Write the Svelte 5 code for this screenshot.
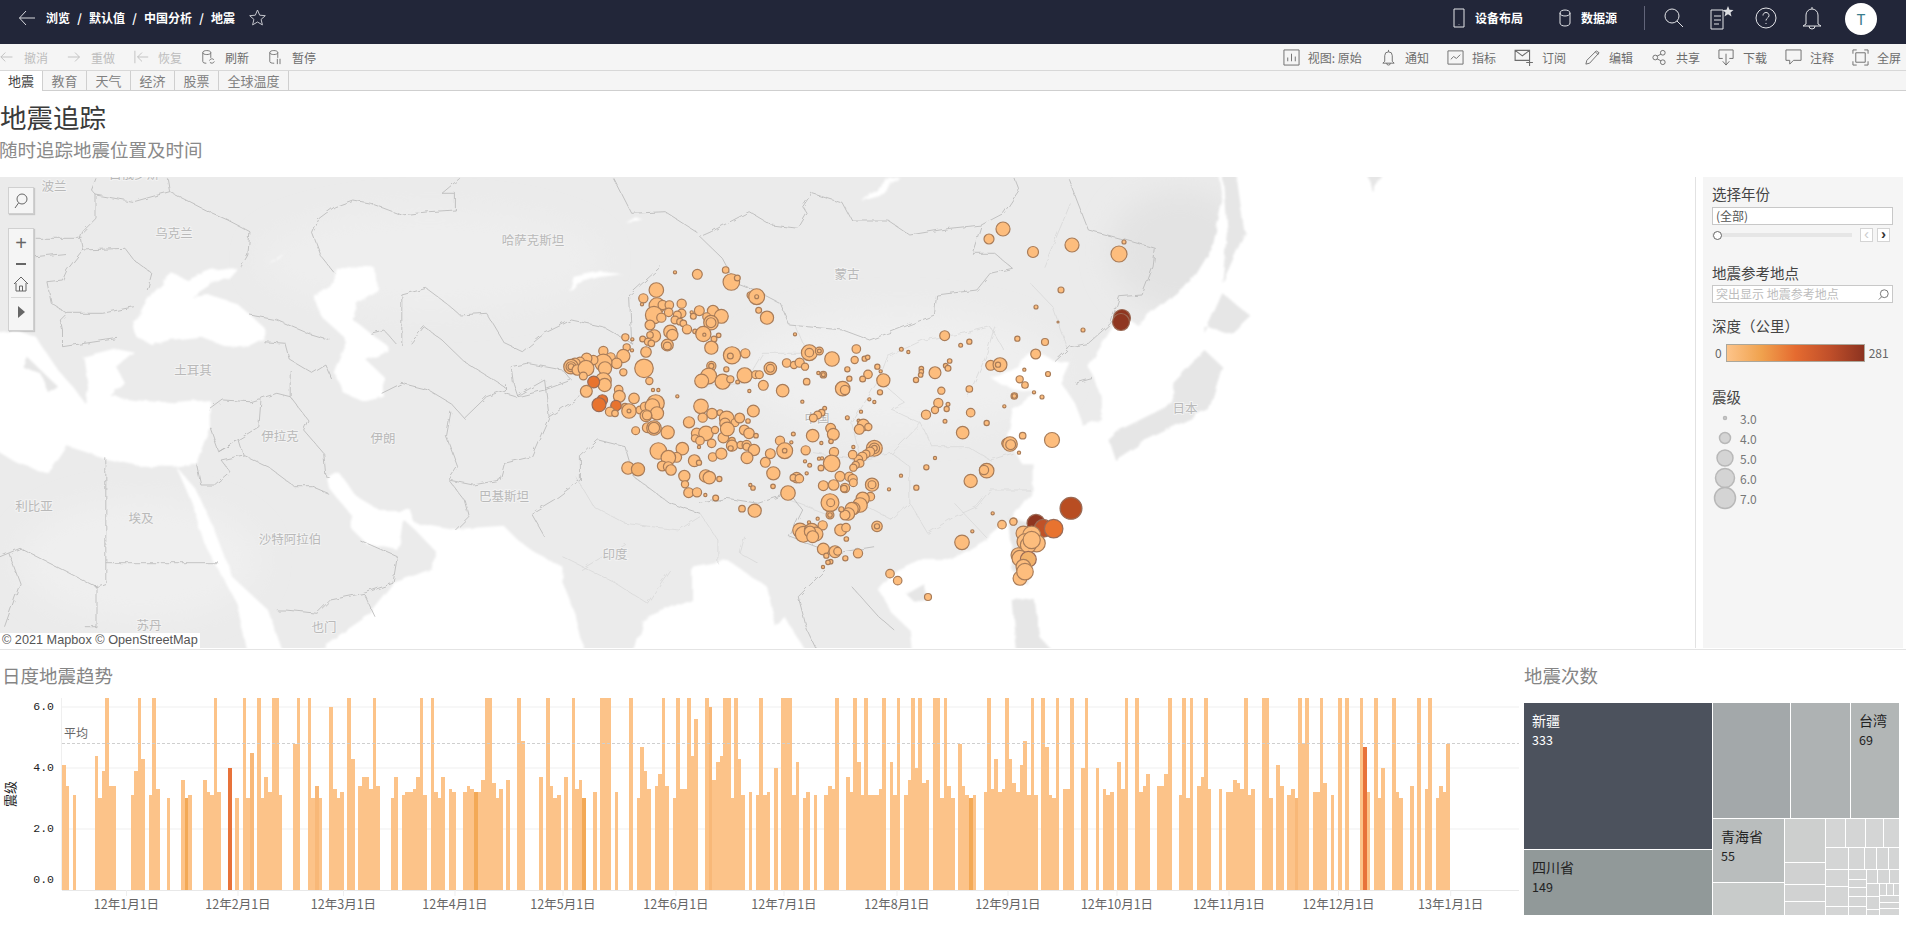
<script>
  // page coordinates come from crops of the reference, a = western crop, b = eastern crop
  const a = (s) => s.trim().split(/\s+/).map((p) => { const [x, y] = p.split(',').map(Number); return `${(x / 2.24).toFixed(1)},${(170 + y / 3).toFixed(1)}`; }).join(' ');
  const b = (s) => s.trim().split(/\s+/).map((p) => { const [x, y] = p.split(',').map(Number); return `${(700 + x / 2.24).toFixed(1)},${(170 + y / 3).toFixed(1)}`; }).join(' ');

  const water = [
    a('300,470 320,410 345,360 385,310 420,330 470,300 530,290 510,320 470,345 430,380 470,375 530,400 590,470 590,510 560,530 500,525 450,500 380,510 340,525 305,500'),
    a('750,290 840,295 845,360 800,400 790,450 830,490 870,530 870,545 820,570 860,620 860,680 815,695 770,670 750,610 770,540 770,500 720,440 705,380 750,340'),
    a('-20,490 40,480 80,500 130,600 170,660 190,700 195,650 185,560 260,535 300,545 260,590 280,640 250,680 300,690 390,700 470,690 470,770 440,880 390,890 320,890 230,865 150,830 110,910 40,880 -20,830'),
    a('395,890 440,960 480,1080 520,1220 600,1320 635,1450 555,1450 530,1300 490,1200 460,1130 430,1000'),
    a('735,930 760,910 800,980 850,1020 920,1020 930,1060 1020,1080 1130,1070 1160,1110 1200,1150 1260,1190 1260,1240 1290,1340 1310,1450 700,1450 820,1340 880,1240 960,1200 980,1150 930,1080 905,1050 900,1100 890,1140 820,1120 790,1080 790,1040 740,960'),
    a('1420,1450 1440,1350 1568,1280 1580,1450'),
    a('1275,365 1285,320 1340,305 1395,312 1340,322 1295,340'),
    b('-20,1190 60,1170 150,1250 170,1370 190,1340 240,1450 -20,1450'),
    b('1160,0 1170,90 1150,220 1100,330 1040,400 980,465 950,440 920,480 870,590 900,680 900,750 860,770 840,700 810,640 830,580 795,575 750,540 700,600 650,620 680,650 760,670 700,720 690,800 720,880 745,880 745,960 700,1040 640,1110 560,1170 490,1170 440,1200 400,1260 430,1330 470,1380 475,1450 2320,1450 2320,0'),
    b('360,90 420,30 450,25 400,75'),
    a('600,280 640,250 620,270'),
    a('1420,140 1440,150 1400,155'),
  ];
  const islands = [
    b('1170,0 1200,0 1220,190 1170,340 1180,190'),
    b('1130,490 1170,370 1235,440 1195,490 1130,470'),
    b('940,780 1060,700 1060,640 1130,540 1170,590 1140,720 1060,770 1000,810 930,870 915,810'),
    b('700,1290 720,1285 750,1290 760,1400 795,1450 710,1450'),
    b('460,1270 500,1240 510,1290 480,1295'),
    b('1490,0 1530,0 1510,70'),
    b('690,1040 740,1060 770,1080 730,1240 700,1200'),
    a('60,560 130,650 110,670 90,610 50,590'),
  ];
  const borders = [
    a('790,90 750,110 715,145 700,190 720,260 750,310'),
    a('790,90 830,100 870,120 900,135 960,125 1020,120 1020,70 990,70 1030,25'),
    a('1375,25 1415,130 1490,125 1560,185'),
    a('375,25 380,65 460,120 510,150 560,185 555,255 540,290'),
    a('380,65 300,95 215,75 205,60 215,25'),
    a('215,75 215,145 185,185 180,205 185,240 280,235 300,270 340,310 330,360'),
    a('185,240 150,300 140,330 105,335 115,400 150,430 230,430 300,410'),
    a('80,205 185,205'),
    a('80,260 150,250'),
    a('150,430 135,450 140,480 140,530 190,520 265,505'),
    a('560,435 620,450 690,490 740,510'),
    a('590,515 640,520 650,570 700,610 730,585 745,630'),
    a('470,720 500,690 560,695 620,670 650,680'),
    a('650,600 650,680 690,750 680,780 725,850 730,920 740,925'),
    a('585,680 580,770 490,845 470,770'),
    a('490,845 535,810 545,855 495,870 515,905 480,945 450,945 440,880'),
    a('545,855 600,890 660,950 700,950 735,970'),
    a('1010,725 1000,800 1025,890 1005,930 1060,945 1120,930 1130,880 1190,860 1230,740 1220,630 1155,680 1130,670'),
    a('855,670 900,640 960,660 1010,700 1040,745 1090,680 1130,660 1130,640'),
    a('900,525 900,375 955,355 1000,400 1030,435 1090,430 1130,520 1170,545 1220,490 1280,450 1350,470 1415,520 1410,375 1480,290'),
    a('890,525 860,480 830,490'),
    a('920,520 950,470 990,510 1040,575 1130,650'),
    a('1145,590 1150,640 1160,680 1220,660 1280,630 1260,600 1180,580 1145,590'),
    a('1005,930 1040,990 1050,1040 1020,1080'),
    a('1220,1100 1190,1030 1240,990 1300,930 1300,860 1340,810 1400,830 1420,920 1500,1000 1568,1030'),
    a('1230,740 1300,680'),
    a('620,1320 640,1320 710,1330 740,1290 815,1270 880,1240 890,1160 805,1110'),
    a('815,1270 840,1340'),
    a('237,865 237,1240 215,1250 215,1370 190,1370'),
    a('237,1178 490,1178'),
    a('215,1250 45,1135 0,1160'),
    a('20,1150 45,1240 10,1370'),
    b('0,200 25,185 110,125 160,165 220,175 240,130 230,110 250,70 320,100 340,150 420,150 470,195 560,175 630,165 610,250 660,250 700,295 650,310 620,360 530,375 525,435 420,490 380,510 320,480 200,465 180,400 130,365 80,340 50,265 0,200'),
    b('630,165 680,130 715,60 705,25'),
    b('825,25 870,180 940,205 1020,235 1015,290 990,375 940,380 920,460 870,520 830,530 795,575'),
    b('840,640 880,625'),
    b('0,1000 60,985 130,1000 200,970 230,1020 200,1100 300,1150 390,1130'),
    b('280,1200 220,1280 240,1380 260,1437'),
    b('340,1250 400,1340 435,1380'),
  ];
  const provinces = [
    b('215,470 240,550 140,550 100,640 0,650'),
    b('495,760 520,830 600,830 650,870 700,850'),
    b('430,720 460,700 400,630 420,560 500,510 590,490 650,470 680,540'),
    b('430,850 470,890 470,1000 510,1090 570,1040 620,1010 650,960 740,960'),
    b('570,1000 640,1100'),
    b('600,680 640,560 660,470'),
    b('740,340 790,410 825,540'),
    b('770,290 830,100'),
    b('250,850 360,870 430,850 495,760 430,720'),
    b('200,990 280,1030 360,1000 430,1050 470,1000'),
    b('100,1100 90,1150 130,1180'),
    b('0,1030 40,1110 40,1180'),
    b('360,870 340,760 400,630'),
    a('1290,920 1330,1010 1400,1060 1520,1080 1568,1040'),
    a('1260,1160 1380,1240 1450,1300 1500,1200'),
    a('1300,1200 1400,1120'),
  ];
  const labels = [
    ['白俄罗斯', 134, 176], ['波兰', 54, 188], ['乌克兰', 174, 235], ['哈萨克斯坦', 533, 242], ['土耳其', 193, 372],
    ['伊拉克', 280, 438], ['伊朗', 383, 440], ['巴基斯坦', 504, 498], ['利比亚', 34, 508], ['埃及', 141, 520],
    ['沙特阿拉伯', 290, 541], ['印度', 615, 556], ['苏丹', 149, 627], ['也门', 324, 629], ['蒙古', 847, 276],
    ['中国', 817, 420], ['日本', 1185, 410],
  ];

  const west = [[412,13,13],[345,7,3],[497,0,8],[514,36,23],[532,24,7],[289,60,20],[250,85,12],[246,103,3],[572,76,9],[590,80,22],[590,80,4],[596,121,7],[621,143,18],[291,107,22],[308,105,12],[328,105,11],[365,101,12],[395,127,3],[418,122,13],[459,123,15],[484,139,19],[400,139,7],[282,135,24],[304,143,12],[326,127,11],[365,130,11],[352,135,10],[345,150,10],[360,155,8],[370,160,8],[440,140,10],[453,158,20],[453,158,13],[270,165,13],[381,178,12],[331,185,18],[337,195,15],[283,198,17],[405,184,5],[416,188,7],[430,192,21],[433,194,3],[462,207,7],[476,196,5],[248,207,7],[264,215,9],[270,195,8],[274,220,8],[322,225,16],[322,228,10],[196,202,9],[217,208,3],[200,232,9],[216,241,3],[258,246,14],[454,233,18],[516,256,24],[511,258,7],[556,250,12],[190,258,18],[152,262,12],[130,243,12],[170,280,14],[130,278,24],[135,295,18],[100,270,12],[80,265,14],[60,275,12],[45,280,14],[33,290,20],[33,290,13],[33,290,7],[52,300,14],[78,295,22],[70,318,10],[190,307,9],[252,295,26],[268,333,9],[105,335,12],[130,332,22],[134,345,18],[101,336,16,'#e8732f'],[454,288,12],[454,288,6],[499,298,6],[446,318,22],[425,333,19],[488,335,21],[511,328,9],[533,336,4],[554,316,21],[587,314,10],[598,314,10],[631,295,17],[631,295,10],[610,346,13],[568,363,3],[279,360,3],[295,360,3],[352,379,3],[79,364,16],[176,359,11],[178,379,16],[222,385,14],[127,390,14,'#e8732f'],[117,404,19,'#e8732f'],[168,407,14,'#e8732f'],[150,425,12],[165,430,8],[195,410,8],[207,423,20],[207,423,4],[240,420,10],[255,410,12],[287,400,24],[277,408,20],[291,430,18],[258,437,16],[261,436,12],[423,409,20],[456,431,14],[428,443,12],[387,457,15],[480,428,7],[500,445,20],[495,460,14],[525,458,10],[539,444,13],[580,423,16],[564,453,5],[227,482,10],[262,473,13],[282,474,20],[282,474,15],[323,487,18],[553,480,13],[567,490,14],[588,497,5],[410,490,14],[438,490,20],[465,480,9],[490,503,14],[502,477,19],[405,505,9],[420,512,11],[455,520,11],[516,512,8,'#f5b26e'],[516,527,15],[542,525,9],[560,525,12],[560,530,9],[582,540,15],[631,551,13],[660,512,12],[616,577,13],[561,563,16],[458,561,11],[484,551,15],[512,535,6],[417,531,3],[295,543,23],[367,536,17],[350,562,13],[325,563,20],[307,588,13],[325,590,13],[333,600,14],[403,572,16],[417,578,6],[204,594,17],[234,598,18,'#f5b26e'],[373,618,15],[375,643,9],[386,668,13],[411,667,12],[436,675,3],[467,684,7],[640,610,18],[437,618,17],[448,623,17],[478,627,6],[571,645,3],[579,654,5],[639,649,5],[546,716,8],[584,722,18]];
  const center = [[45,13,3],[494,17,13],[712,26,6],[568,35,6],[542,46,4],[88,68,22],[88,68,11],[118,63,10],[118,63,4],[229,57,11],[156,87,20],[20,99,11],[42,105,9],[59,98,12],[75,110,9],[224,90,9],[254,86,6],[263,82,5],[364,58,4],[385,66,3],[509,93,5],[497,107,5],[504,115,7],[632,106,13],[660,104,19],[654,104,6],[767,72,13],[292,110,6],[202,118,6],[130,134,8],[130,134,4],[115,129,3],[264,133,11],[302,124,3],[248,147,7],[208,146,6],[310,151,18],[424,116,5],[424,125,5],[422,135,5],[408,150,6],[465,128,16],[80,155,8],[719,148,9],[733,119,3],[735,165,8],[188,176,20],[195,180,12],[300,187,6],[484,182,9],[568,177,8],[762,187,3],[703,198,8],[703,198,5],[8,182,17],[67,215,3],[268,208,3],[283,216,3],[475,219,12],[465,240,9],[438,254,12],[504,223,4],[500,237,6],[572,248,11],[673,229,3],[243,245,3],[202,263,4],[134,235,4],[125,248,8],[113,255,10],[100,264,10],[495,274,4],[620,279,6],[236,272,3],[250,285,16],[265,291,9],[238,298,13],[152,295,13],[160,313,16],[98,317,17],[40,312,4],[153,334,5],[34,337,3],[124,339,3],[548,308,17],[728,317,8],[680,340,13],[690,342,20],[692,344,13],[220,351,3],[77,361,12],[162,366,12],[14,362,22],[14,362,5],[283,355,22],[283,355,14],[283,355,7],[270,365,12],[258,372,10],[247,380,12],[235,388,11],[240,400,10],[227,405,9],[220,413,9],[126,385,3],[117,386,3],[155,400,23],[75,394,3],[89,406,4],[123,414,7],[218,374,11],[717,368,3],[465,384,3],[439,412,6],[620,422,20],[612,420,12],[572,453,18],[363,437,3],[80,430,3],[50,443,14],[40,443,8],[58,446,11],[180,439,13],[208,440,12],[218,447,12],[220,458,10],[130,467,13],[161,465,14],[195,474,12],[192,476,8],[276,464,18],[276,464,10],[409,473,6],[327,478,3],[24,489,20],[271,500,11],[248,506,18],[150,518,25],[152,518,10],[240,525,20],[222,535,16],[215,537,18],[205,552,17],[195,555,13],[184,538,6],[150,555,10],[150,555,5],[113,566,3],[638,550,3],[87,577,3],[128,586,12],[291,589,14],[291,589,6],[60,601,20],[70,613,22],[95,602,20],[108,612,19],[90,605,15],[98,620,16],[182,600,16],[198,593,11],[199,627,5],[577,604,3],[546,637,20],[666,584,11],[701,574,8],[130,657,16],[165,665,16],[173,664,10],[234,670,12],[139,677,6],[152,695,5],[144,697,5],[196,685,6],[129,711,3],[330,731,11],[353,752,11]];
  const taiwan = [[213,85,31,'#b84d22'],[108,130,25,'#8f3620'],[130,145,25,'#c05228'],[161,146,26,'#e8732f'],[40,125,9],[70,160,20],[95,165,25],[110,190,24],[75,185,22],[55,225,20],[85,195,22],[60,235,22],[85,238,22,'#f2b26b'],[70,260,20],[60,295,19],[75,275,23],[95,180,24]];
  // north-east and sea points, already in page coordinates
  const east = [[1003,229,7],[989,239,5],[1033,252,5.5],[1072,245,7],[1119,254,8],[1124,242,2],[1061,290,3],[1036,307,2],[1058,322,1],[1083,330,2],[1045,342,3.5],[1048,374,2.5],[1042,397,2],[1052,440,7.5],[928,597,3.5],[1122,318,8.5,'#8f3620'],[1121,322,8.5,'#8f3620']];

  const place = (list, ox, oy) => list.map(([x, y, r, c]) => ({ x: ox + x / 3, y: oy + y / 3, r: r / 3 + 0.6, c }));
  const bubbles = [
    ...east.map(([x, y, r, c]) => ({ x, y, r, c })),
    ...place(west, 560, 270),
    ...place(center, 780, 330),
    ...place(taiwan, 1000, 480),
  ];

  // magnitudes x10, 65 = cut off at the top, +100 = deeper, +200 = deepest, +300 = a little deeper
  const segments = [
    { from: 62, to: 492, vals: [41,34,0,31,0,0,0,0,0,44,30,39,65,34,34,0,0,0,0,31,39,65,43,0,31,65,33,0,0,30,0,0,0,36,130,31,0,0,0,36,32,31,65,32,0,0,240,0,30,0,65,30,345,0,65,30,37,32,65,65,31,0,0,0,48,65,0,0,65,30,334,30,0,0,60,33,30,32,0,65,43,0,34,37,37,33,65,34,0,0,0,30,37,0,31,32,32,33,37,65,31,0,65,32,30,37,0,33,32,0,0,32,34,33,132,32,36,65,65] },
    { from: 492, to: 904, vals: [35,30,33,0,36,0,0,65,49,0,0,0,0,37,0,65,34,30,31,0,37,0,65,33,36,130,0,0,32,0,65,65,65,0,32,0,0,0,65,0,30,47,39,33,0,34,38,65,34,0,30,65,33,33,65,44,56,0,0,65,360,36,42,44,65,65,30,65,43,31,0,32,0,31,65,31,32,0,40,0,65,65,65,31,42,0,30,32,0,31,0,0,31,34,33,65,0,0,37,32,65,42,31,65,31,31,31,33,65,0,42,31,65,0] },
    { from: 904, to: 1450, vals: [31,36,65,40,65,35,36,0,65,65,30,65,34,30,0,48,34,31,130,31,0,0,32,65,33,43,32,33,65,43,35,32,41,49,31,65,31,0,65,47,31,30,65,0,33,33,65,0,0,40,65,0,0,40,0,33,31,32,0,42,33,65,0,0,65,32,34,38,0,0,34,34,38,65,0,0,31,65,30,65,0,34,37,65,33,0,0,33,0,32,32,36,35,33,65,31,33,0,0,65,65,30,0,41,34,0,31,33,330,65,48,65,0,32,32,65,35,0,31,0,65,0,65,0,0,0,65,247,32,0,65,30,40,0,0,65,32,30,0,0,34,0,65,0,33,65,0,30,34,32,48] },
  ];
  const tones = ['#fcc389', '#f3a956', '#e8733a', '#f8b878'];
  const y0 = 889;
  const unit = 30.5;
  const bars = segments.flatMap((s) => {
    const w = (s.to - s.from) / s.vals.length;
    return s.vals.map((raw, i) => {
      const v = raw % 100;
      const left = Math.round(s.from + i * w);
      const right = Math.round(s.from + (i + 1) * w);
      const h = Math.round(Math.min((v / 10) * unit, y0 - 697));
      return { x: left, w: right - left, h, tone: tones[Math.floor(raw / 100)], v };
    }).filter((b) => b.v > 0);
  });
  const months = [
    ['12年1月1日', 126.5], ['12年2月1日', 238], ['12年3月1日', 343.5], ['12年4月1日', 455], ['12年5月1日', 563],
    ['12年6月1日', 676], ['12年7月1日', 784], ['12年8月1日', 897], ['12年9月1日', 1008], ['12年10月1日', 1117],
    ['12年11月1日', 1229], ['12年12月1日', 1338.5], ['13年1月1日', 1450.7],
  ];
  const yticks = [['6.0', 706], ['4.0', 767], ['2.0', 828]];

  const c1 = '#d4d5d5';
  const map = (sizes, c, dir) => sizes.map((s) => ({ s, c, dir }));
  const tree = {
    dir: 'row', kids: [
      { s: 188, dir: 'col', kids: [
        { s: 146, c: '#4c525d', name: '新疆', n: 333, light: true },
        { c: '#919999', name: '四川省', n: 149 },
      ] },
      { dir: 'col', kids: [
        { s: 115, dir: 'row', kids: [
          { s: 77, c: '#a3a8aa' },
          { s: 59, c: '#aeb2b3' },
          { c: '#b2b6b6', name: '台湾', n: 69, right: true },
        ] },
        { dir: 'row', kids: [
          { s: 70.5, dir: 'col', kids: [{ s: 63, c: '#b9bdbd', name: '青海省', n: 55 }, { c: '#c8cbca' }] },
          { s: 40, dir: 'col', kids: [{ s: 43, c: '#cdcfce' }, { s: 21, c: '#d0d1d1' }, { s: 16, c: '#d1d2d2' }, { c: '#d2d3d3' }] },
          { dir: 'col', kids: [
            { s: 28, dir: 'row', kids: [...map([19.5, 19, 17], c1), { c: c1 }] },
            { s: 21, dir: 'row', kids: [...map([22.5, 15, 11, 11], c1), { c: c1 }] },
            { dir: 'row', kids: [
              { s: 22.5, dir: 'col', kids: [...map([16, 19], c1), { c: c1 }] },
              { s: 17, dir: 'col', kids: [...map([8.5, 7.5, 8, 9], c1), { c: c1 }] },
              { dir: 'col', kids: [
                { s: 13, dir: 'row', kids: [...map([10, 11], c1), { c: c1 }] },
                { dir: 'row', kids: [
                  { s: 12, dir: 'col', kids: [...map([12, 12], c1), { c: c1 }] },
                  { dir: 'col', kids: [
                    { s: 11, dir: 'row', kids: [...map([6, 6], c1), { c: c1 }] },
                    ...map([5.5, 5.5], c1),
                    { c: c1 },
                  ] },
                ] },
              ] },
            ] },
          ] },
        ] },
      ] },
    ],
  };

  const undo = [
    { label: '撤消', off: true, d: 'M14 9H1M6 4 1 9l5 5' },
    { label: '重做', off: true, d: 'M1 9h13M9 4l5 5-5 5' },
    { label: '恢复', off: true, d: 'M1 2v14M16 9H4M9 4 4 9l5 5' },
    { label: '刷新', d: 'M2 4c0-3 9-3 9 0s-9 3-9 0M2 4v10c0 1.500 2 2 4 2M11 4v6M9.500 13a3 3 0 0 1 5-1M15 14a3 3 0 0 1-5 1' },
    { label: '暂停', d: 'M2 4c0-3 9-3 9 0s-9 3-9 0M2 4v10c0 1.500 2 2 5 2M11 4v6M10.500 11v6M13.500 11v6' },
  ];
  const tools = [
    { label: '视图: 原始', d: 'M1 1h16v16H1zM5 13V9M9 13V5M13 13V8' },
    { label: '通知', d: 'M9 1v2M5 13V7a4 4 0 0 1 8 0v6l2 2H3zM7 15a2 2 0 0 0 4 0' },
    { label: '指标', d: 'M1 2h16v14H1zM4 11l3-3 3 2 4-4' },
    { label: '订阅', w: 20, d: 'M1 3h13v9H1zM1 3l6.500 5L14 3M14 11v6M11 14h6' },
    { label: '编辑', d: 'M2 16l1-4L13 2l3 2L6 15zM12 3l3 3' },
    { label: '共享', d: 'M7 9a2.500 2.500 0 1 1-5 0 2.500 2.500 0 0 1 5 0zM15 4a2.500 2.500 0 1 1-5 0 2.500 2.500 0 0 1 5 0zM15 14a2.500 2.500 0 1 1-5 0 2.500 2.500 0 0 1 5 0zM6.500 7.500l4-2M6.500 10.500l4 2' },
    { label: '下载', d: 'M5 10H1V1h15v9h-4M8.500 5v12M5 13l3.500 4 3.500-4' },
    { label: '注释', d: 'M1 1h16v11H9l-4 4v-4H1z' },
    { label: '全屏', d: 'M1 5V1h4M13 1h4v4M17 13v4h-4M5 17H1v-4M4 4h10v10H4z' },
  ];
  const tabs = ['地震', '教育', '天气', '经济', '股票', '全球温度'];
  const crumbs = ['浏览', '默认值', '中国分析', '地震'];
</script>

{#snippet cell(node)}
  <div
    class="cell"
    class:row={node.dir === 'row'}
    class:col={node.dir === 'col'}
    class:light={node.light}
    style:flex={node.s ? `0 0 ${node.s}px` : '1 1 0'}
    style:background={node.c}
  >
    {#if node.kids}
      {#each node.kids as kid}
        {@render cell(kid)}
      {/each}
    {:else if node.name}
      <span class="cell-name">{node.name}</span>
      <span class="cell-num">{node.n}</span>
    {/if}
  </div>
{/snippet}

<div class="page">
  <header class="topbar">
    <svg class="back" width="18" height="18" viewBox="0 0 18 18"><path d="M17 9H1.500M8 2 1.500 9 8 16" /></svg>
    <nav class="crumbs">
      {#each crumbs as crumb, i}
        {#if i > 0}<span class="slash">/</span>{/if}
        <span>{crumb}</span>
      {/each}
    </nav>
    <svg class="star" width="17" height="17" viewBox="0 0 17 17"><path d="M8.500 1l2.200 5.200 5.600.5-4.200 3.700 1.300 5.500-4.900-2.900-4.900 2.900 1.300-5.500L.7 6.700l5.600-.5z" /></svg>
    <div class="top-right">
      <div class="top-link">
        <svg width="12" height="20" viewBox="0 0 12 20"><path d="M1 1h10v18H1zM6 16v.5" /></svg>
        <span>设备布局</span>
      </div>
      <div class="top-link db">
        <svg width="12" height="18" viewBox="0 0 12 18"><path d="M1 4c0-4 10-4 10 0s-10 4-10 0M1 4v10c0 4 10 4 10 0V4" /></svg>
        <span>数据源</span>
      </div>
      <div class="divider"></div>
      <svg class="t-search" width="20" height="20" viewBox="0 0 20 20"><path d="M15 8a7 7 0 1 1-14 0 7 7 0 0 1 14 0zM13 13l6 6" /></svg>
      <svg class="t-doc" width="24" height="24" viewBox="0 0 24 24">
        <path d="M1 4h12v19H1zM4 10h7M4 14h7M4 18h5" />
        <path class="solid" d="M18 0l1.500 3.700 4 .3-3 2.600 1 3.900-3.500-2.200-3.500 2.200 1-3.900-3-2.600 4-.3z" />
      </svg>
      <svg class="t-help" width="22" height="22" viewBox="0 0 22 22"><path d="M21 11a10 10 0 1 1-20 0 10 10 0 0 1 20 0zM8 8.500c0-4 6-4 6 0 0 2.500-3 2.500-3 5M11 16v1" /></svg>
      <svg class="t-bell" width="22" height="24" viewBox="0 0 22 24"><path d="M11 1v2M5 18V9a6 6 0 0 1 12 0v9l3 2H2zM8 20a3 3 0 0 0 6 0" /></svg>
      <div class="avatar">T</div>
    </div>
  </header>

  <div class="toolbar">
    <div class="tool-group">
      {#each undo as t}
        <div class="tool" class:off={t.off}>
          <svg width="16" height="18" viewBox="0 0 18 18"><path d={t.d} /></svg>
          <span>{t.label}</span>
        </div>
      {/each}
    </div>
    <div class="tool-group right-tools">
      {#each tools as t}
        <div class="tool">
          <svg width={t.w ?? 17} height={t.w ?? 17} viewBox="0 0 18 18"><path d={t.d} /></svg>
          <span>{t.label}</span>
        </div>
      {/each}
    </div>
  </div>

  <div class="tabs">
    {#each tabs as tab, i}
      <div class="tab" class:active={i === 0}>{tab}</div>
    {/each}
  </div>

  <div class="heading">
    <h1>地震追踪</h1>
    <p>随时追踪地震位置及时间</p>
  </div>

  <div class="map-row">
    <div class="map">
      <svg class="map-svg" width="1695" height="471" viewBox="0 177 1695 471">
        <defs>
          <filter id="rough" x="0" y="0" width="100%" height="100%">
            <feTurbulence type="fractalNoise" baseFrequency="0.05" numOctaves="3" seed="4" result="noise" />
            <feDisplacementMap in="SourceGraphic" in2="noise" scale="7" />
            <feGaussianBlur stdDeviation="0.9" />
          </filter>
          <filter id="wiggle" x="0" y="0" width="100%" height="100%">
            <feTurbulence type="fractalNoise" baseFrequency="0.12" numOctaves="2" seed="9" result="noise" />
            <feDisplacementMap in="SourceGraphic" in2="noise" scale="5" />
          </filter>
          <filter id="wide" x="-20%" y="-20%" width="140%" height="140%"><feGaussianBlur stdDeviation="14" /></filter>
        </defs>
        <rect x="0" y="177" width="1695" height="471" fill="#ebebeb" />
        <g filter="url(#wide)">
          <ellipse cx="1180" cy="250" rx="70" ry="60" fill="#e3e3e3" />
          <ellipse cx="900" cy="370" rx="160" ry="60" fill="#efefef" />
          <ellipse cx="140" cy="560" rx="120" ry="60" fill="#efefef" />
          <ellipse cx="430" cy="260" rx="170" ry="50" fill="#eeeeee" />
        </g>
        <g filter="url(#rough)">
          {#each water as pts}
            <polygon points={pts} fill="#fff" />
          {/each}
          {#each islands as pts}
            <polygon points={pts} fill="#e6e6e6" />
          {/each}
        </g>
        <g filter="url(#wiggle)">
          {#each provinces as pts}
            <polyline points={pts} class="province" />
          {/each}
          {#each borders as pts}
            <polyline points={pts} class="border" />
          {/each}
        </g>
        {#each labels as [text, x, y]}
          <text class="map-label" x={x} y={y} text-anchor="middle" dominant-baseline="middle">{text}</text>
        {/each}
        {#each bubbles as p}
          <circle cx={p.x} cy={p.y} r={p.r} fill={p.c ?? '#fdbd7d'} stroke={p.c && p.c !== '#f5b26e' ? '#9a6a55' : '#a97c58'} />
        {/each}
      </svg>

      <button class="map-btn search-btn" aria-label="搜索">
        <svg width="14" height="16" viewBox="0 0 14 16"><path d="M13 6a5 5 0 1 1-10 0 5 5 0 0 1 10 0zM4.500 10 1 15" /></svg>
      </button>
      <div class="map-btn map-tools">
        <span class="plus">+</span>
        <span class="minus"></span>
        <svg width="16" height="16" viewBox="0 0 16 16"><path d="M1 8l7-7 7 7M3 7v8h10V7M6.500 15v-5h3v5" /></svg>
        <span class="sep"></span>
        <span class="arrow"></span>
      </div>
      <div class="credit">© 2021 Mapbox © OpenStreetMap</div>
    </div>

    <aside class="side">
      <div class="side-title">选择年份</div>
      <div class="select">(全部)</div>
      <div class="slider-row">
        <div class="slider">
          <span class="knob"></span>
        </div>
        <span class="step">‹</span>
        <span class="step on">›</span>
      </div>

      <div class="side-title place">地震参考地点</div>
      <div class="select search-field">
        <span>突出显示 地震参考地点</span>
        <svg width="11" height="11" viewBox="0 0 14 14"><path d="M13 6a5 5 0 1 1-10 0 5 5 0 0 1 10 0zM4.500 10 1 13.500" /></svg>
      </div>

      <div class="side-title depth">深度（公里）</div>
      <div class="ramp-row">
        <span>0</span>
        <div class="ramp"></div>
        <span>281</span>
      </div>

      <div class="side-title mag">震级</div>
      <div class="sizes">
        {#each [[1.5, '3.0'], [5.5, '4.0'], [8, '5.0'], [9.5, '6.0'], [10.5, '7.0']] as [r, text]}
          <div class="size-row">
            <svg width="24" height="20" viewBox="0 0 24 20"><circle cx="11" cy="10" r={r} /></svg>
            <span>{text}</span>
          </div>
        {/each}
      </div>
    </aside>
  </div>

  <div class="bottom">
    <section class="trend">
      <h2>日度地震趋势</h2>
      <svg class="chart" width="1520" height="235" viewBox="0 690 1520 235">
        {#each yticks as [, y]}
          <line x1="62" x2="1519" y1={y} y2={y} class="grid" />
        {/each}
        <line x1="61.500" x2="61.500" y1="697" y2="889" class="grid" />
        {#each bars as bar}
          <rect x={bar.x} y={y0 - bar.h} width={bar.w} height={bar.h} fill={bar.tone} />
        {/each}
        <line x1="62" x2="1519" y1="889.500" y2="889.500" class="grid base" />
        <line x1="62" x2="1519" y1="742.500" y2="742.500" class="avg" />
        <text class="avg-label" x="64" y="737">平均</text>
        {#each yticks as [text, y]}
          <text class="ytick" x="54" y={y + 3} text-anchor="end">{text}</text>
        {/each}
        <text class="ytick" x="54" y="882" text-anchor="end">0.0</text>
        <text class="yname" transform="translate(15 793) rotate(-90)" text-anchor="middle">震级</text>
        {#each months as [text, x]}
          <line x1={x} x2={x} y1="889" y2="895" class="grid" />
          <text class="xtick" x={x} y="908" text-anchor="middle">{text}</text>
        {/each}
      </svg>
    </section>
    <section class="counts">
      <h2>地震次数</h2>
      <div class="treemap">
        {@render cell(tree)}
      </div>
    </section>
  </div>
</div>

<style>
  :global(body) {
    margin: 0;
    background: #fff;
    overflow: hidden;
  }

  .page {
    width: 1906px;
    height: 925px;
    overflow: hidden;
    font-family: "Noto Sans CJK SC", "Liberation Sans", sans-serif;
    color: #555;
  }

  svg path {
    fill: none;
    stroke: currentColor;
    stroke-width: 1;
  }

  .topbar {
    height: 44px;
    background: #222639;
    color: #fff;
    display: flex;
    align-items: center;
    padding: 0 0 9px 18px;
    box-sizing: border-box;
  }

  .back {
    color: #d8d9de;
  }

  .crumbs {
    margin-left: 10px;
    font-size: 12px;
    font-weight: 700;
    display: flex;
    gap: 7px;
  }

  .slash {
    width: 5px;
    text-align: center;
  }

  .star {
    margin-left: 14px;
    color: #c4c5cc;
  }

  .top-right {
    margin-left: auto;
    display: flex;
    align-items: center;
    color: #e3e4e8;
  }

  .top-link {
    display: flex;
    align-items: center;
    gap: 10px;
    font-size: 12px;
    font-weight: 700;
    color: #fff;
    margin-right: 36px;
  }

  .top-link.db {
    margin-right: 27px;
  }

  .top-link svg {
    color: #e3e4e8;
  }

  .divider {
    width: 1px;
    height: 24px;
    background: #62657a;
    margin-right: 19px;
  }

  .t-search {
    margin-right: 26px;
  }

  .t-doc {
    margin-right: 21px;
  }

  .t-help {
    margin-right: 24px;
  }

  .t-bell {
    margin-right: 22px;
  }

  .solid {
    fill: #dcdde1;
    stroke: none;
  }

  .avatar {
    width: 32px;
    height: 32px;
    border-radius: 50%;
    background: #fff;
    color: #3a7d8c;
    font-size: 15px;
    line-height: 32px;
    text-align: center;
    margin: 3px 29px 0 0;
  }

  .toolbar {
    height: 26px;
    background: #f5f5f5;
    border-bottom: 1px solid #d8d8d8;
    box-sizing: content-box;
    display: flex;
    justify-content: space-between;
    align-items: center;
  }

  .tool-group {
    display: flex;
    align-items: center;
    gap: 19px;
  }

  .right-tools {
    gap: 18px;
    padding-right: 5px;
  }

  .tool {
    display: flex;
    align-items: center;
    gap: 8px;
    font-size: 12px;
    color: #6d6d6d;
    white-space: nowrap;
  }

  .tool.off {
    color: #bdbdbd;
  }

  .tool svg {
    flex: none;
  }

  .tabs {
    height: 19px;
    background: #f5f5f5;
    border-bottom: 1px solid #cfcfcf;
    display: flex;
  }

  .tab {
    padding: 0 8.500px;
    font-size: 13px;
    line-height: 19px;
    color: #808080;
    border-right: 1px solid #cfcfcf;
  }

  .tab.active {
    background: #fff;
    color: #444;
    height: 20px;
    padding: 0 8px;
  }

  .heading {
    height: 86px;
    padding-top: 9px;
    box-sizing: border-box;
  }

  h1 {
    margin: 0;
    font-size: 26.500px;
    font-weight: 400;
    line-height: 34px;
    color: #3a3a3a;
  }

  .heading p {
    margin: 3px 0 0 -1px;
    font-size: 18.500px;
    line-height: 24px;
    color: #8a8a8a;
  }

  .map-row {
    display: flex;
    height: 472px;
    border-bottom: 1px solid #e4e4e4;
  }

  .map {
    position: relative;
    width: 1695px;
    height: 471px;
    overflow: hidden;
    border-right: 1px solid #e2e2e2;
    flex: none;
  }

  .map-svg {
    display: block;
  }

  .border {
    fill: none;
    stroke: #b6b6b6;
    stroke-width: 0.8;
  }

  .province {
    fill: none;
    stroke: #d6d6d6;
    stroke-width: 0.7;
  }

  .map-label {
    font-size: 12.500px;
    fill: #b9b9b9;
    stroke: #f2f2f2;
    stroke-width: 2px;
    paint-order: stroke;
  }

  circle {
    stroke-width: 1.200;
  }

  .map-btn {
    position: absolute;
    left: 8px;
    width: 26px;
    background: #f5f5f5;
    border: 1px solid #d0d0d0;
    box-shadow: 1px 1px 1px rgba(0, 0, 0, 0.15);
    box-sizing: border-box;
    color: #666;
    padding: 0;
  }

  .search-btn {
    top: 10px;
    height: 27px;
    display: flex;
    align-items: center;
    justify-content: center;
  }

  .map-tools {
    top: 51px;
    height: 103px;
    display: flex;
    flex-direction: column;
    align-items: center;
  }

  .plus {
    font-size: 20px;
    line-height: 20px;
    margin-top: 4px;
    height: 22px;
    font-family: "Liberation Sans", sans-serif;
  }

  .minus {
    width: 10px;
    height: 2px;
    background: #666;
    margin: 8px 0 11px;
  }

  .sep {
    width: 20px;
    height: 1px;
    background: #d8d8d8;
    margin: 5px 0 8px;
  }

  .arrow {
    width: 0;
    height: 0;
    border-left: 7px solid #666;
    border-top: 6px solid transparent;
    border-bottom: 6px solid transparent;
  }

  .credit {
    position: absolute;
    left: 0;
    bottom: 0;
    background: #fff;
    font-family: "Liberation Sans", sans-serif;
    font-size: 12.700px;
    line-height: 15px;
    padding: 0 2px;
    color: #555;
  }

  .side {
    width: 200px;
    margin-left: 7px;
    background: #f5f5f5;
    padding: 7px 10px 0 9px;
    box-sizing: border-box;
    height: 471px;
    color: #666;
  }

  .side-title {
    font-size: 14.500px;
    line-height: 20px;
    color: #444;
  }

  .select {
    margin-top: 3px;
    height: 18px;
    background: #fff;
    border: 1px solid #c8c8c8;
    box-sizing: border-box;
    font-size: 12px;
    line-height: 16px;
    padding-left: 3px;
    color: #555;
  }

  .slider-row {
    display: flex;
    align-items: center;
    gap: 4px;
    height: 18px;
    margin-top: 1px;
  }

  .slider {
    position: relative;
    width: 140px;
    height: 4px;
    background: #e6e6e6;
    margin-right: 4px;
  }

  .knob {
    position: absolute;
    left: 1px;
    top: -2px;
    width: 7px;
    height: 7px;
    border: 1px solid #666;
    border-radius: 50%;
    background: #fff;
  }

  .step {
    width: 13px;
    height: 14px;
    background: #fff;
    border: 1px solid #d4d4d4;
    box-sizing: border-box;
    font-family: "Liberation Sans", sans-serif;
    font-size: 15px;
    line-height: 9px;
    text-align: center;
    color: #ccc;
  }

  .step.on {
    color: #333;
    font-weight: 700;
  }

  .place {
    margin-top: 19px;
  }

  .search-field {
    margin-top: 2px;
    color: #bdbdbd;
    display: flex;
    align-items: center;
    justify-content: space-between;
    padding-right: 3px;
  }

  .search-field svg {
    color: #555;
  }

  .depth {
    margin-top: 13px;
  }

  .ramp-row {
    display: flex;
    align-items: center;
    gap: 4px;
    margin-top: 8px;
    padding-left: 3px;
    font-size: 12px;
    line-height: 18px;
    color: #666;
  }

  .ramp {
    width: 139px;
    height: 18px;
    box-sizing: border-box;
    border: 1px solid #aba79b;
    background: linear-gradient(90deg, #fdc48a, #f0a24e 25%, #e56b30 50%, #c04f2a 75%, #8c3320);
  }

  .mag {
    margin-top: 25px;
  }

  .sizes {
    margin-top: 1px;
  }

  .size-row {
    display: flex;
    align-items: center;
    height: 20px;
    font-size: 12px;
    padding-left: 2px;
    gap: 2px;
    color: #777;
  }

  .size-row svg {
    overflow: visible;
  }

  .size-row circle {
    fill: #d4d4d4;
    stroke: #b8b8b8;
    stroke-width: 1.500;
  }

  .bottom {
    display: flex;
    height: 276px;
  }

  .trend {
    width: 1524px;
    flex: none;
  }

  h2 {
    margin: 12px 0 0;
    font-size: 18.500px;
    font-weight: 400;
    line-height: 26px;
    color: #858585;
  }

  .trend h2 {
    padding-left: 2px;
  }

  .chart {
    display: block;
    margin-top: 3px;
  }

  .grid {
    stroke: #efefef;
    stroke-width: 1;
  }

  .base {
    stroke: #e8e8e8;
  }

  .avg {
    stroke: #cfcfcf;
    stroke-width: 1;
    stroke-dasharray: 3 2;
  }

  .avg-label {
    font-size: 12px;
    fill: #666;
  }

  .ytick {
    font-family: "Liberation Mono", monospace;
    font-size: 11.500px;
    fill: #222;
  }

  .yname {
    font-size: 13px;
    fill: #222;
  }

  .xtick {
    font-size: 12.500px;
    fill: #666;
  }

  .counts {
    width: 375px;
    flex: none;
  }

  .treemap {
    margin-top: 15px;
    width: 375px;
    height: 212px;
    display: flex;
  }

  .treemap > :global(.cell) {
    flex: 1 1 0 !important;
  }

  .cell {
    min-width: 0;
    min-height: 0;
    box-sizing: border-box;
    overflow: hidden;
    background: #fff;
    color: #222;
    padding: 0;
    line-height: 1;
  }

  .row {
    display: flex;
    flex-direction: row;
    gap: 1px;
  }

  .col {
    display: flex;
    flex-direction: column;
    gap: 1px;
  }

  .light {
    color: #fff;
  }

  .cell-name {
    display: block;
    margin: 7px 0 0 8px;
    font-size: 14px;
    line-height: 20px;
  }

  .cell-num {
    display: block;
    margin: 2px 0 0 8px;
    font-size: 12.500px;
    line-height: 16px;
  }
</style>
